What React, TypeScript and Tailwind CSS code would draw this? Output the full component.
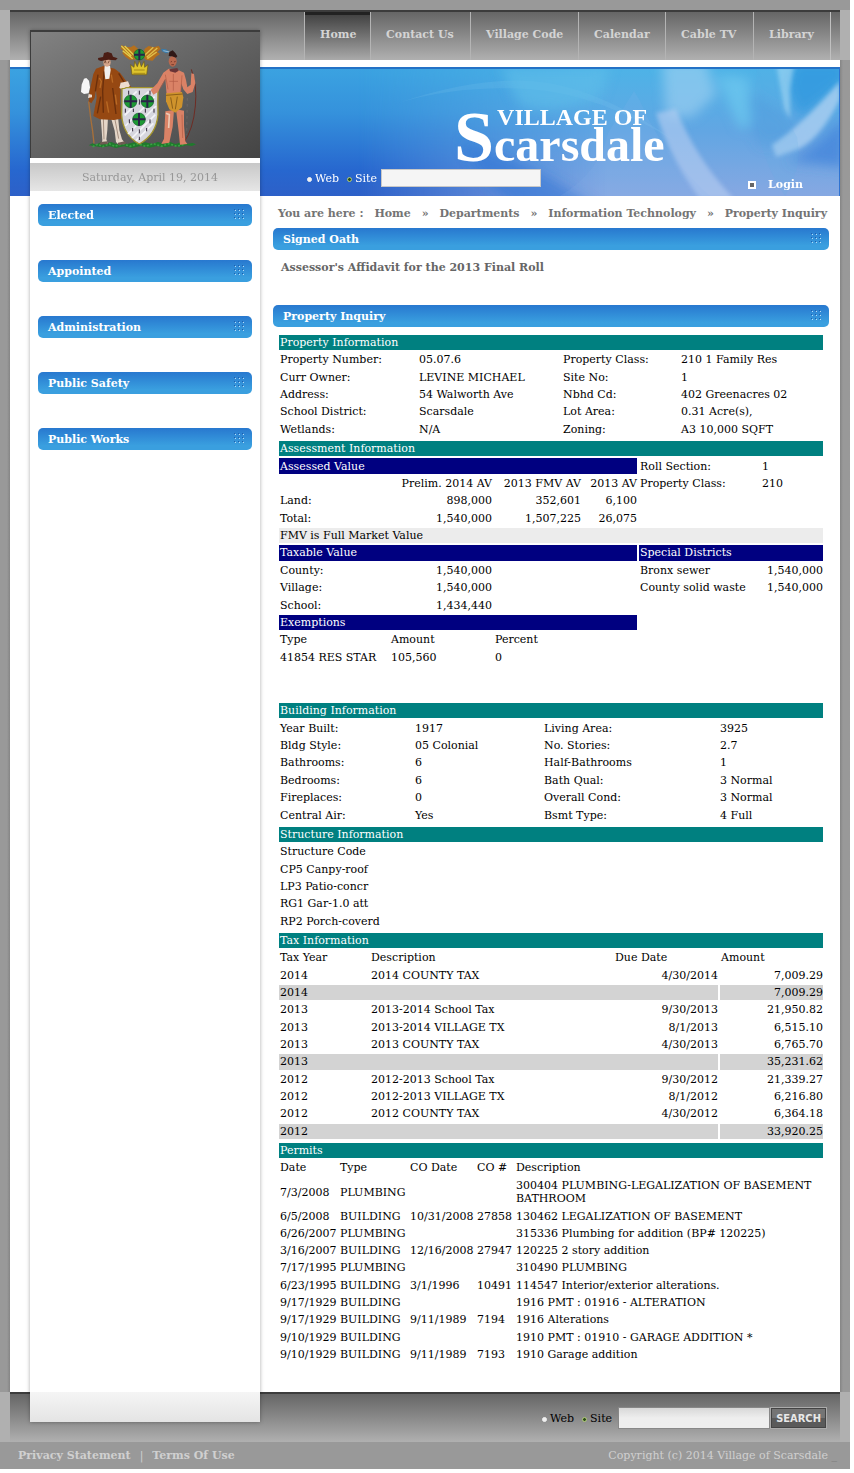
import type { ReactNode } from "react";

const NAV = [
  { label: "Home", width: "w-[66px]", active: true },
  { label: "Contact Us", width: "w-[100px]" },
  { label: "Village Code", width: "w-[108px]" },
  { label: "Calendar", width: "w-[87px]" },
  { label: "Cable TV", width: "w-[88px]" },
  { label: "Library", width: "w-[77px]" },
];

const SIDE = ["Elected", "Appointed", "Administration", "Public Safety", "Public Works"];

const CRUMBS = ["Home", "Departments", "Information Technology", "Property Inquiry"];

const PROPERTY = [
  ["Property Number:", "05.07.6", "Property Class:", "210 1 Family Res"],
  ["Curr Owner:", "LEVINE MICHAEL", "Site No:", "1"],
  ["Address:", "54 Walworth Ave", "Nbhd Cd:", "402 Greenacres 02"],
  ["School District:", "Scarsdale", "Lot Area:", "0.31 Acre(s),"],
  ["Wetlands:", "N/A", "Zoning:", "A3 10,000 SQFT"],
];

const BUILDING = [
  ["Year Built:", "1917", "Living Area:", "3925"],
  ["Bldg Style:", "05 Colonial", "No. Stories:", "2.7"],
  ["Bathrooms:", "6", "Half-Bathrooms", "1"],
  ["Bedrooms:", "6", "Bath Qual:", "3 Normal"],
  ["Fireplaces:", "0", "Overall Cond:", "3 Normal"],
  ["Central Air:", "Yes", "Bsmt Type:", "4 Full"],
];

const STRUCTURES = ["Structure Code", "CP5 Canpy-roof", "LP3 Patio-concr", "RG1 Gar-1.0 att", "RP2 Porch-coverd"];

const TAXES = [
  { year: "2014", desc: "2014 COUNTY TAX", due: "4/30/2014", amount: "7,009.29" },
  { year: "2014", amount: "7,009.29" },
  { year: "2013", desc: "2013-2014 School Tax", due: "9/30/2013", amount: "21,950.82" },
  { year: "2013", desc: "2013-2014 VILLAGE TX", due: "8/1/2013", amount: "6,515.10" },
  { year: "2013", desc: "2013 COUNTY TAX", due: "4/30/2013", amount: "6,765.70" },
  { year: "2013", amount: "35,231.62" },
  { year: "2012", desc: "2012-2013 School Tax", due: "9/30/2012", amount: "21,339.27" },
  { year: "2012", desc: "2012-2013 VILLAGE TX", due: "8/1/2012", amount: "6,216.80" },
  { year: "2012", desc: "2012 COUNTY TAX", due: "4/30/2012", amount: "6,364.18" },
  { year: "2012", amount: "33,920.25" },
];

const PERMITS = [
  ["7/3/2008", "PLUMBING", "", "", "300404 PLUMBING-LEGALIZATION OF BASEMENT BATHROOM"],
  ["6/5/2008", "BUILDING", "10/31/2008", "27858", "130462 LEGALIZATION OF BASEMENT"],
  ["6/26/2007", "PLUMBING", "", "", "315336 Plumbing for addition (BP# 120225)"],
  ["3/16/2007", "BUILDING", "12/16/2008", "27947", "120225 2 story addition"],
  ["7/17/1995", "PLUMBING", "", "", "310490 PLUMBING"],
  ["6/23/1995", "BUILDING", "3/1/1996", "10491", "114547 Interior/exterior alterations."],
  ["9/17/1929", "BUILDING", "", "", "1916 PMT : 01916 - ALTERATION"],
  ["9/17/1929", "BUILDING", "9/11/1989", "7194", "1916 Alterations"],
  ["9/10/1929", "BUILDING", "", "", "1910 PMT : 01910 - GARAGE ADDITION *"],
  ["9/10/1929", "BUILDING", "9/11/1989", "7193", "1910 Garage addition"],
];

const TABLE = "w-full table-fixed border-separate border-spacing-[2px] leading-[14px] text-black";

function Grip() {
  return (
    <svg width="12" height="12" viewBox="0 0 12 12" aria-hidden="true">
      {[1, 5, 9].map((y) =>
        [1, 5, 9].map((x) => (
          <g key={`${x}-${y}`}>
            <rect x={x} y={y - 1} width="1" height="1" fill="#1f5fae" />
            <rect x={x + 1} y={y} width="1" height="1" fill="#b5dcf6" />
          </g>
        )),
      )}
    </svg>
  );
}

function TitleBar({ children }: { children: ReactNode }) {
  return (
    <h2 className="flex h-[22px] items-center justify-between rounded-[5px] bg-linear-to-b from-[#2878cf] to-[#3a9fdf] to-80% pr-[7px] pl-[10px] font-bold text-white">
      {children}
      <Grip />
    </h2>
  );
}

function Bar({ span, children, navy }: { span: number; children: ReactNode; navy?: boolean }) {
  return (
    <th
      colSpan={span}
      className={`px-[1px] pt-[1px] pb-0 text-left font-normal text-white ${navy ? "bg-[#000080]" : "bg-[#008080]"}`}
    >
      {children}
    </th>
  );
}

function Td({ children, right, span }: { children?: ReactNode; right?: boolean; span?: number }) {
  return (
    <td colSpan={span} className={`pt-[1px] pb-0 pl-[1px] whitespace-nowrap ${right ? "pr-0 text-right" : "pr-[1px]"}`}>
      {children}
    </td>
  );
}

function Th({ children, right }: { children: ReactNode; right?: boolean }) {
  return (
    <th className={`pt-[1px] pb-0 pl-[1px] font-normal whitespace-nowrap ${right ? "pr-0 text-right" : "pr-[1px] text-left"}`}>
      {children}
    </th>
  );
}

function Radios({ name }: { name: string }) {
  const dot =
    "mt-[2px] size-[5px] shrink-0 appearance-none rounded-full border border-[#f0f0f0] bg-[#f0f0f0] checked:border-[#b4cc7c] checked:bg-[#2c4d18]";
  return (
    <>
      <label className="flex items-center gap-[3px]">
        <input type="radio" name={name} className={dot} />
        Web
      </label>
      <label className="ml-2 flex items-center gap-[3px]">
        <input type="radio" name={name} defaultChecked className={dot} />
        Site
      </label>
    </>
  );
}

function Roundel({ x, y, r }: { x: number; y: number; r: number }) {
  return (
    <g>
      <circle cx={x} cy={y} r={r} fill="#1d9a35" stroke="#145c2a" strokeWidth="2" />
      <path d={`M${x - r} ${y}H${x + r}M${x} ${y - r}V${y + r}`} stroke="#2a2348" strokeWidth="6" />
    </g>
  );
}

function Crest() {
  return (
    <svg width="130" height="120" viewBox="0 0 390 360" role="img" aria-label="Village crest">
      <path
        d="M38 322l12-6 10 4 14-7 14 5 18-6 14 6 18-6 16 6 20-5 16 4 18-4 20 5 18-6 16 5 20-5 16 6 18-5 16 5 18-3 10 4-12 5-16-2-20 5-20-4-24 5-24-4-24 5-26-5-26 6-24-5-24 5-20-5-22 3z"
        fill="#1f7a2c"
      />
      <path d="M50 326l16-8 14 8 20-9 16 8 24-8 22 8 24-8 22 8 24-8 24 8 22-8 24 8 22-6" stroke="#39a043" strokeWidth="5" fill="none" strokeDasharray="6 5" />

      <path d="M38 190l6 50 6 40 4 36" stroke="#a8703a" strokeWidth="4" fill="none" />
      <path d="M24 122l7-2 8 8 3 20-4 18-14 2-9-6 2-22z" fill="#f6f6f6" />
      <path d="M74 236h22l-2 40-3 28 4 12-18 2 2-12-2-30zM104 236h22l4 40 8 28 8 10-18 6-8-8-4-34z" fill="#e4d6c8" />
      <path d="M74 312l20-2 2 8-26 2zM126 314l20-4 4 8-24 4z" fill="#6e5b52" />
      <path d="M82 238l2 66M116 240l12 62" stroke="#a48f80" strokeWidth="3" />
      <path
        d="M82 84l-22 8-8 16-10 46-4 36 8 6 10-16 4-26 2 26-8 42-2 12 20 10 42 2 22-4-4-50 2-62 14 34 12-2 8-12-20-24-16-22-16-12z"
        fill="#964812"
      />
      <path d="M66 110l-8 50M74 176l-10 50M128 106l22 36M110 150l10 78M84 100l-4 60 2 64" stroke="#6a2f0c" strokeWidth="4" fill="none" />
      <path d="M70 120l6 10-4 20M118 170l4 30M92 190l6 34M106 110l4 24" stroke="#b96a25" strokeWidth="4" fill="none" />
      <path d="M86 84l16 0 2 12-4 26-12 2-3-26z" fill="#f1efed" />
      <path d="M134 134l22-4 6 14-18 12-14-6zM38 168l10 2 0 8-12 2z" fill="#eddccf" />
      <ellipse cx="93" cy="73" rx="11" ry="13" fill="#d6a58a" />
      <path d="M84 76l4-8 2 8M96 76l4-8" stroke="#54301e" strokeWidth="2" fill="none" />
      <path d="M66 60l15-3 3-12 11-3 12 4 4 10 14 5-6 6-22-2-22 4-8-3z" fill="#4b1d14" />

      <path
        d="M134 20l14 6 16 2 10-6 12 10 4 20-10 12-18 2-14-10-10-12 8-2-14-12 8-2z"
        fill="#b5701c"
      />
      <path d="M136 24l30 30M146 24l28 28M140 38l30 24" stroke="#e2cf4c" strokeWidth="4" />
      <path d="M248 24l-16 4-14-4-12 8-6 22 10 12 20 2 10-12 12-8-8-6 10-10z" fill="#b5701c" />
      <path d="M244 30l-32 28M232 28l-26 24M242 42l-28 20" stroke="#e0c04c" strokeWidth="4" />
      <Roundel x={190} y={50} r={16} />
      <path d="M168 110l-4-30 10 8 2-18 8 16 6-18 6 18 8-16 2 18 10-8-4 30z" fill="#dfc52c" stroke="#6e5b10" strokeWidth="2" />
      <path d="M172 106h36M174 96h32" stroke="#a58a1a" strokeWidth="3" />

      <path d="M138 152q8 0 12-3h84q6 4 12 3-1 40 0 78-5 60-56 88-50-28-53-88 1-40 1-78z" fill="#d6d6de" stroke="#a3942d" strokeWidth="4" />
      <path
        d="M146 196l36-36M146 232l72-72M148 264l88-88M156 288l84-84M168 300l70-70M180 308l52-52"
        stroke="#f4f4f8"
        strokeWidth="5"
      />
      <path
        d="M158 158v12M190 158v12M222 158v12M190 184v16M148 212v12M172 212v10M208 212v12M234 212v12M160 244v12M222 244v12M190 274v12M170 270v10M212 270v10M190 296v10"
        stroke="#2e2438"
        strokeWidth="3"
      />
      <Roundel x={164} y={190} r={19} />
      <Roundel x={214} y={190} r={19} />
      <Roundel x={189} y={244} r={19} />

      <path d="M256 32l14 2 12 8-12 4-12-6z" fill="#3b7cab" />
      <path d="M262 38l18 4" stroke="#c9dcea" strokeWidth="2" />
      <path d="M346 94q18 50 12 110-6 70-36 112" stroke="#6e2c24" strokeWidth="3" fill="none" />
      <path d="M334 180l-2 110" stroke="#8b7f7c" strokeWidth="1" strokeDasharray="8 10" />
      <path
        d="M278 92l24 2 22 10 6 22 4 22 10-8 2-34 8 2 4 28-8 26-16 6-12-14-6-18-2 34-42 2-4-50-14 24-8 16-14 8-8-14 20-20 18-32z"
        fill="#da8266"
      />
      <path d="M268 220l26-4-4 50-10 48-24 4 8-16 2-40zM300 214l24 4 0 44 4 48 6 8-22 2-4-40z" fill="#da8266" />
      <path d="M270 226l10 4-2 40" stroke="#edc9b5" strokeWidth="5" fill="none" />
      <path d="M318 230l2 70M268 110l8 44M318 112l-4 54M280 130l26 0M292 108l0 50M252 152l16-28" stroke="#b05a44" strokeWidth="2" fill="none" />
      <path d="M270 166l48-4 4 16-4 30-20 16-18-10-10-24z" fill="#cf932c" />
      <path d="M270 172l50-4M284 178l6 34M304 176l-6 38" stroke="#8c5f18" strokeWidth="3" fill="none" />
      <ellipse cx="290" cy="70" rx="12" ry="16" fill="#b9694e" />
      <path d="M280 94l24-4 4 8-10 6-16-4z" fill="#6a3436" />
      <path d="M278 54l2-12 10-5 8 8 6 10-4 4-12-4z" fill="#301816" />
      <path d="M284 72l4-2M294 72l5-2M286 80h8" stroke="#5a261c" strokeWidth="2" />
    </svg>
  );
}

function BannerArt() {
  return (
    <svg
      className="absolute inset-0 size-full"
      viewBox="0 0 830 129"
      preserveAspectRatio="none"
      aria-hidden="true"
    >
      <defs>
        <linearGradient id="sky" x1="0" y1="0" x2="0" y2="1">
          <stop offset="0" stopColor="#3ba3e1" />
          <stop offset="0.35" stopColor="#3592dc" />
          <stop offset="0.8" stopColor="#2767cf" />
          <stop offset="1" stopColor="#2d60c8" />
        </linearGradient>
        <linearGradient id="haze" x1="0" y1="0" x2="0" y2="1">
          <stop offset="0" stopColor="#4db3e7" />
          <stop offset="0.5" stopColor="#62a6e3" />
          <stop offset="1" stopColor="#86a8e2" />
        </linearGradient>
        <linearGradient id="fade" x1="0" y1="0" x2="1" y2="0">
          <stop offset="0.42" stopColor="#fff" stopOpacity="0" />
          <stop offset="0.72" stopColor="#fff" />
        </linearGradient>
        <mask id="right">
          <rect width="830" height="129" fill="url(#fade)" />
        </mask>
        <filter id="soft" x="-20%" y="-20%" width="140%" height="140%">
          <feGaussianBlur stdDeviation="6" />
        </filter>
        <filter id="edge" x="-20%" y="-20%" width="140%" height="140%">
          <feGaussianBlur stdDeviation="2" />
        </filter>
        <clipPath id="frame">
          <rect width="830" height="129" />
        </clipPath>
      </defs>
      <rect width="830" height="129" fill="url(#sky)" />
      <rect width="830" height="129" fill="url(#haze)" mask="url(#right)" />
      <path d="M388 36q90-30 150-20 60 10 130 60-80-50-150-54-70-4-130 14z" fill="#8fd0f0" opacity="0.15" />
      <g clipPath="url(#frame)">
        <g filter="url(#soft)">
          <path d="M490 0h110l-10 30q-50 20-80 8z" fill="#5fc0ea" opacity="0.6" />
          <path d="M450 74q90 30 140 70h-80q-40-30-60-70z" fill="#2f74d6" opacity="0.55" />
          <path d="M652-6h44l10 34-24 22-26 0z" fill="#a4d2f2" opacity="0.6" />
          <path d="M706 8l32 2 6 46-14 6z" fill="#6cc6ee" opacity="0.8" />
          <path d="M786-6h50v20l-46 36q-10-20-14-36z" fill="#2f96de" opacity="0.75" />
          <path d="M834 50v50l-56-6q30-14 56-44z" fill="#3f80da" opacity="0.7" />
          <path d="M740 24q-8 30 12 56l40-10-20-26z" fill="#4a96dc" opacity="0.4" />
        </g>
        <g filter="url(#edge)">
          <path d="M646 46l20-4q20 50 58 90h-34q-30-40-44-86z" fill="#b8cff2" opacity="0.6" />
          <path d="M830 14l0 18q-20 40-42 50l-22 8-4-12q30-20 68-64z" fill="#b0d2f2" opacity="0.75" />
          <path d="M766-2l18 0-4 24 0 30-6-10z" fill="#a8d8f4" opacity="0.6" />
        </g>
        <path d="M598 66l26-42 6 10q20 50 70 95h-150q40-24 48-63z" fill="#8cb8ea" opacity="0.15" />
        <path d="M775 129q-36-50-28-129h20q2 40 20 70 6 30-12 59z" fill="#5cb0e6" opacity="0.15" />
      </g>
      <rect width="830" height="2" fill="#2472c6" />
      <rect x="829" width="1" height="129" fill="#2a6fd0" />
    </svg>
  );
}

export default function App() {
  return (
    <div className="bg-white pr-1 pb-1 font-['DejaVu_Serif',serif] text-[11px] leading-[15px]">
      <div className="grid grid-cols-[10px_20px_230px_1fr_10px] grid-rows-[10px_20px_30px_7px_129px_1fr_30px_20px_27px] bg-white">
        <div className="col-span-full row-start-1 bg-[#999]" />
        <div className="col-span-full row-start-2 row-end-4 bg-[#b0b0b0]" />
        <div className="col-start-1 row-start-4 row-end-7 bg-linear-to-r from-[#999] from-70% to-[#858585]" />
        <div className="col-start-5 row-start-4 row-end-7 bg-linear-to-l from-[#999] from-70% to-[#858585]" />
        <div className="col-span-full row-start-7 row-end-9 bg-[#b0b0b0]" />

        <header className="col-start-2 col-end-5 row-start-2 row-end-4 flex justify-end border-t-2 border-[#3c3c3c] bg-linear-to-b from-[#666] to-[#b0b0b0] pr-[9px]">
          <nav aria-label="Main">
            <ul className="flex h-full border-r border-[#c0c0c0]">
              {NAV.map((item) => (
                <li key={item.label} className={`border-l border-[#b4b4b4] ${item.width}`}>
                  <a
                    href="#"
                    className={`flex h-full pl-[15px] font-bold whitespace-nowrap text-[#d4d4d4] ${
                      item.active
                        ? "border-t-[3px] border-[#222] bg-linear-to-b from-[#444] to-[#aaa] pt-[12px]"
                        : "pt-[15px]"
                    }`}
                  >
                    {item.label}
                  </a>
                </li>
              ))}
            </ul>
          </nav>
        </header>

        <div className="relative col-start-2 col-end-5 row-start-5">
          <BannerArt />
        </div>
        <div className="relative col-start-4 row-start-5 flex flex-col justify-between">
          <h1 className="flex pt-[43px] pl-[194px] font-['Liberation_Serif',serif] font-bold text-white">
            <span className="text-[72px] leading-[54px]">S</span>
            <span className="flex flex-col whitespace-nowrap">
              <span className="pl-[3px] text-[24px] leading-[14px]">VILLAGE OF</span>
              <span className="text-[48px] leading-[42px]">carsdale</span>
            </span>
          </h1>
          <div className="flex h-[27px] items-start justify-between pr-[37px] pl-[47px] text-white">
            <form className="flex items-center">
              <Radios name="top-scope" />
              <input
                type="text"
                aria-label="Search"
                className="ml-1 h-[18px] w-[160px] border border-[#c8c8c8] bg-[#f5f5f5] px-1 text-black"
              />
            </form>
            <a href="#" className="mt-2 flex items-center gap-3 font-bold">
              <span className="size-[8px] border-2 border-white bg-[#666]" />
              Login
            </a>
          </div>
        </div>

        <footer className="col-start-2 col-end-5 row-start-7 row-end-9 flex items-center justify-end border-t-2 border-[#3c3c3c] bg-linear-to-b from-[#666] to-[#b0b0b0] pr-[13px]">
          <form className="flex items-center text-black">
            <Radios name="bottom-scope" />
            <input
              type="text"
              aria-label="Search"
              className="ml-[6px] h-[22px] w-[152px] border border-[#888] bg-linear-to-b from-[#d8d8d8] to-[#eee] to-50% px-1"
            />
            <button
              type="submit"
              className="h-[22px] w-[57px] border border-[#ababab] bg-linear-to-b from-[#747474] from-50% to-[#5a5a5a] to-50% font-['DejaVu_Sans_Condensed','DejaVu_Sans',sans-serif] text-[11px] font-bold text-[#e8e8e8] inset-ring inset-ring-[#444]"
            >
              SEARCH
            </button>
          </form>
        </footer>

        <aside className="relative z-10 col-start-3 row-start-3 row-end-8 flex flex-col bg-white shadow-[0_0_4px_#00000055]">
          <div className="flex h-[128px] justify-center border-t-2 border-l border-[#3c3c3c] bg-linear-to-br from-[#828282] to-[#444] pt-[6px] pr-[10px]">
            <Crest />
          </div>
          <div className="mt-[5px] h-[28px] bg-linear-to-b from-[#c8c8c8] to-[#e6e6e6] pt-[7px] pl-[10px] text-center text-[#979797]">
            Saturday, April 19, 2014
          </div>
          <nav aria-label="Departments" className="flex grow flex-col gap-[34px] px-2 pt-[13px]">
            {SIDE.map((s) => (
              <TitleBar key={s}>{s}</TitleBar>
            ))}
          </nav>
          <div className="h-[30px] bg-linear-to-b from-[#f5f5f5] to-[#e4e4e4]" />
        </aside>

        <main className="col-start-4 row-start-6 pr-[11px] pb-[28px] pl-[13px]">
          <nav aria-label="Breadcrumb" className="flex h-8 justify-between pt-[10px] pr-[2px] pl-[5px] font-bold whitespace-nowrap text-[#747474]">
            <span>You are here :</span>
            {CRUMBS.map((c, i) => (
              <span key={c} className="contents">
                {i > 0 && <span>»</span>}
                <a href="#">{c}</a>
              </span>
            ))}
          </nav>

          <TitleBar>Signed Oath</TitleBar>
          <p className="h-[55px] px-2 pt-[10px] font-bold text-[#666]">
            <a href="#">Assessor's Affidavit for the 2013 Final Roll</a>
          </p>
          <TitleBar>Property Inquiry</TitleBar>

          <div className="px-1 pt-[6px]">
            <table className={`h-[106px] ${TABLE}`}>
              <colgroup>
                <col className="w-[137px]" />
                <col className="w-[142px]" />
                <col className="w-[116px]" />
                <col className="w-[143px]" />
              </colgroup>
              <tbody>
                <tr>
                  <Bar span={4}>Property Information</Bar>
                </tr>
                {PROPERTY.map((r) => (
                  <tr key={r[0]}>
                    {r.map((c, i) => (
                      <Td key={i}>{c}</Td>
                    ))}
                  </tr>
                ))}
              </tbody>
            </table>

            <table className={`h-[228px] ${TABLE}`}>
              <colgroup>
                <col className="w-[109px]" />
                <col className="w-[102px]" />
                <col className="w-[87px]" />
                <col className="w-[54px]" />
                <col className="w-[120px]" />
                <col className="w-[62px]" />
              </colgroup>
              <tbody>
                <tr>
                  <Bar span={6}>Assessment Information</Bar>
                </tr>
                <tr>
                  <Bar span={4} navy>Assessed Value</Bar>
                  <Td>Roll Section:</Td>
                  <Td>1</Td>
                </tr>
                <tr>
                  <Td />
                  <Th right>Prelim. 2014 AV</Th>
                  <Th right>2013 FMV AV</Th>
                  <Th right>2013 AV</Th>
                  <Td>Property Class:</Td>
                  <Td>210</Td>
                </tr>
                <tr>
                  <Td>Land:</Td>
                  <Td right>898,000</Td>
                  <Td right>352,601</Td>
                  <Td right>6,100</Td>
                </tr>
                <tr>
                  <Td>Total:</Td>
                  <Td right>1,540,000</Td>
                  <Td right>1,507,225</Td>
                  <Td right>26,075</Td>
                </tr>
                <tr>
                  <td colSpan={6} className="bg-[#ececec] px-[1px] pt-[1px] pb-0">FMV is Full Market Value</td>
                </tr>
                <tr>
                  <Bar span={4} navy>Taxable Value</Bar>
                  <Bar span={2} navy>Special Districts</Bar>
                </tr>
                <tr>
                  <Td>County:</Td>
                  <Td right>1,540,000</Td>
                  <Td span={2} />
                  <Td>Bronx sewer</Td>
                  <Td right>1,540,000</Td>
                </tr>
                <tr>
                  <Td>Village:</Td>
                  <Td right>1,540,000</Td>
                  <Td span={2} />
                  <Td>County solid waste</Td>
                  <Td right>1,540,000</Td>
                </tr>
                <tr>
                  <Td>School:</Td>
                  <Td right>1,434,440</Td>
                </tr>
                <tr>
                  <Bar span={4} navy>Exemptions</Bar>
                </tr>
                <tr>
                  <Th>Type</Th>
                  <Th>Amount</Th>
                  <Th>Percent</Th>
                </tr>
                <tr>
                  <Td>41854 RES STAR</Td>
                  <Td>105,560</Td>
                  <Td>0</Td>
                </tr>
              </tbody>
            </table>

            <table className={`mt-[34px] h-[124px] ${TABLE}`}>
              <colgroup>
                <col className="w-[133px]" />
                <col className="w-[127px]" />
                <col className="w-[174px]" />
                <col className="w-[104px]" />
              </colgroup>
              <tbody>
                <tr>
                  <Bar span={4}>Building Information</Bar>
                </tr>
                {BUILDING.map((r) => (
                  <tr key={r[0]}>
                    {r.map((c, i) => (
                      <Td key={i}>{c}</Td>
                    ))}
                  </tr>
                ))}
              </tbody>
            </table>

            <table className={`h-[106px] ${TABLE}`}>
              <tbody>
                <tr>
                  <Bar span={1}>Structure Information</Bar>
                </tr>
                {STRUCTURES.map((s) => (
                  <tr key={s}>
                    <Td>{s}</Td>
                  </tr>
                ))}
              </tbody>
            </table>

            <table className={`h-[210px] ${TABLE}`}>
              <colgroup>
                <col className="w-[89px]" />
                <col className="w-[242px]" />
                <col className="w-[104px]" />
                <col className="w-[103px]" />
              </colgroup>
              <tbody>
                <tr>
                  <Bar span={4}>Tax Information</Bar>
                </tr>
                <tr>
                  <Th>Tax Year</Th>
                  <Th>Description</Th>
                  <Th>Due Date</Th>
                  <Th>Amount</Th>
                </tr>
                {TAXES.map((t, i) =>
                  t.desc ? (
                    <tr key={i}>
                      <Td>{t.year}</Td>
                      <Td>{t.desc}</Td>
                      <Td right>{t.due}</Td>
                      <Td right>{t.amount}</Td>
                    </tr>
                  ) : (
                    <tr key={i}>
                      <td colSpan={3} className="bg-[#d3d3d3] px-[1px] pt-[1px] pb-0">{t.year}</td>
                      <td className="bg-[#d3d3d3] pt-[1px] pr-0 pb-0 text-right">{t.amount}</td>
                    </tr>
                  ),
                )}
              </tbody>
            </table>

            <table className={`h-[223px] ${TABLE}`}>
              <colgroup>
                <col className="w-[58px]" />
                <col className="w-[68px]" />
                <col className="w-[65px]" />
                <col className="w-[37px]" />
                <col className="w-[308px]" />
              </colgroup>
              <tbody>
                <tr>
                  <Bar span={5}>Permits</Bar>
                </tr>
                <tr>
                  <Th>Date</Th>
                  <Th>Type</Th>
                  <Th>CO Date</Th>
                  <Th>CO #</Th>
                  <Th>Description</Th>
                </tr>
                {PERMITS.map((p, i) => (
                  <tr key={i} className={i === 0 ? "h-[29px]" : ""}>
                    <Td>{p[0]}</Td>
                    <Td>{p[1]}</Td>
                    <Td>{p[2]}</Td>
                    <Td>{p[3]}</Td>
                    <td className={`px-[1px] pb-0 ${i === 0 ? "pt-0 leading-[13px]" : "pt-[1px]"}`}>{p[4]}</td>
                  </tr>
                ))}
              </tbody>
            </table>
          </div>
        </main>

        <div className="col-span-full row-start-9 flex justify-between bg-[#999] pt-[6px] pr-[13px] pl-[18px] text-[#d0d0d0]">
          <nav aria-label="Legal" className="flex gap-[9px] font-bold">
            <a href="#">Privacy Statement</a>
            <span className="font-normal">|</span>
            <a href="#">Terms Of Use</a>
          </nav>
          <p>
            Copyright (c) 2014 Village of Scarsdale <span className="text-[#777]">_</span>
          </p>
        </div>
      </div>
    </div>
  );
}
